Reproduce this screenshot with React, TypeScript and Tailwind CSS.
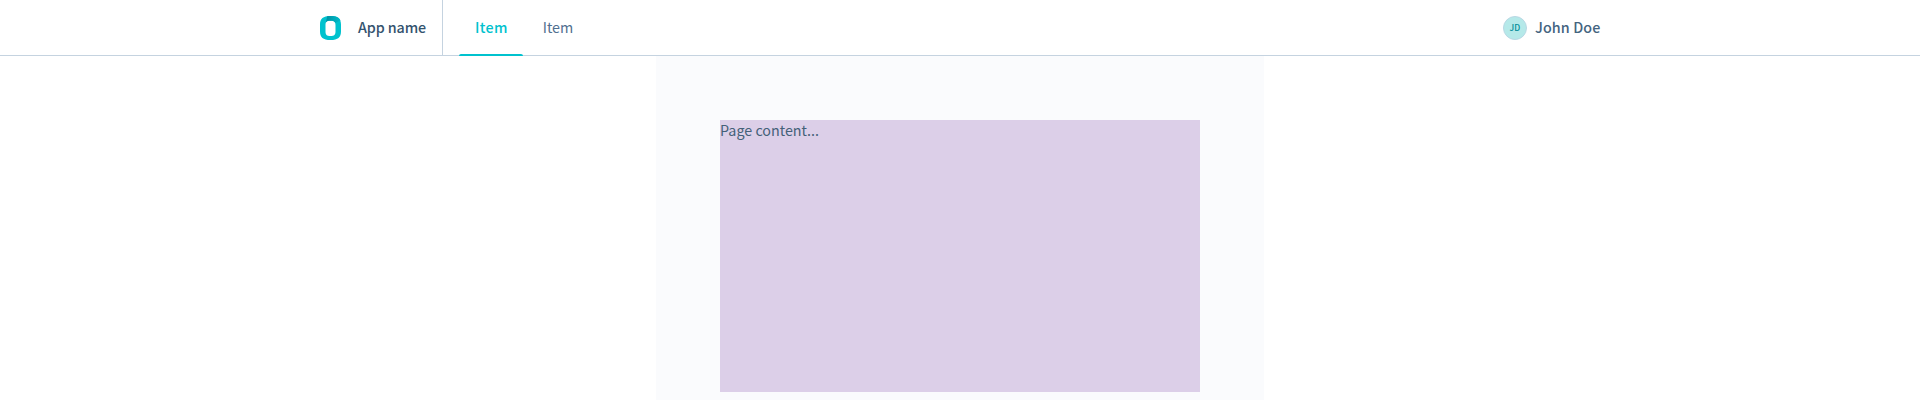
import type { ReactNode } from "react";

function Logo() {
  return (
    <svg width="21" height="24" viewBox="0 0 21 24" aria-hidden="true" className="block">
      <defs>
        <linearGradient id="shade" x1="0" y1="0" x2="1" y2="0">
          <stop offset="0" stopColor="#008fa2" />
          <stop offset="1" stopColor="#00bcca" />
        </linearGradient>
      </defs>
      <path
        fill="#00c2ce"
        fillRule="evenodd"
        d="M10.500 0C3 0 0 2.600 0 8.500v7C0 21.400 3 24 10.500 24S21 21.400 21 15.500v-7C21 2.600 18 0 10.500 0Zm0 4.700c3.900 0 5 1 5 4.500v6c0 3.500-1.100 4.700-5 4.700s-5-1.200-5-4.700v-6c0-3.500 1.100-4.500 5-4.500Z"
      />
      <path
        fill="url(#shade)"
        d="M7.200 0.200C8.200 0 9.300 0 10.500 0c5.500 0 8.800 1.300 10 4.600L15.200 7c-.5-1.800-1.800-2.300-4.700-2.300-2.600 0-4 .3-4.600 1.800Z"
      />
    </svg>
  );
}

function NavItem({ active, children }: { active?: boolean; children: ReactNode }) {
  return (
    <a
      className={
        active
          ? "relative flex h-14 w-16 items-center justify-center pb-0.5 pl-px font-medium tracking-[0.4px] text-[#00c2ce]"
          : "relative flex h-14 w-[70px] items-center justify-center pb-0.5 text-[#516f90]"
      }
    >
      {children}
      {active && <span className="absolute inset-x-0 bottom-0 h-0.5 rounded-t-sm bg-[#00c2ce]" />}
    </a>
  );
}

export default function App() {
  return (
    <div className="flex h-[400px] flex-col overflow-hidden bg-white font-['Noto_Sans_CJK_SC',sans-serif] text-[14.300px] leading-6 text-[#446178]">
      <header className="h-14 shrink-0 border-b border-[#c5d3e0]">
        <div className="mx-auto flex h-14 w-[1280px] items-center">
          <div className="flex h-14 w-[123px] items-center border-r border-[#c5d3e0]">
            <Logo />
            <span className="ml-[17px] whitespace-nowrap pb-0.5 font-medium tracking-[-0.100px] text-[#33536e]">
              App name
            </span>
          </div>
          <nav className="ml-4 flex">
            <NavItem active>Item</NavItem>
            <NavItem>Item</NavItem>
          </nav>
          <div className="ml-auto flex items-center">
            <span className="mr-2 flex size-6 items-center justify-center rounded-full border border-[#b9d8e4] bg-[#b5e9e9] pb-px text-[8.500px] font-medium leading-none tracking-[0.300px] text-[#008c98]">
              JD
            </span>
            <span className="w-[65px] whitespace-nowrap pb-0.5 font-medium tracking-[0.100px] text-[#446480]">
              John Doe
            </span>
          </div>
        </div>
      </header>
      <main className="mx-auto w-[608px] grow bg-[#fafbfd] px-16 pt-16">
        <div className="flow-root h-[272px] bg-[#dccfe8]">
          <p className="-mt-0.5">Page content...</p>
        </div>
      </main>
    </div>
  );
}
